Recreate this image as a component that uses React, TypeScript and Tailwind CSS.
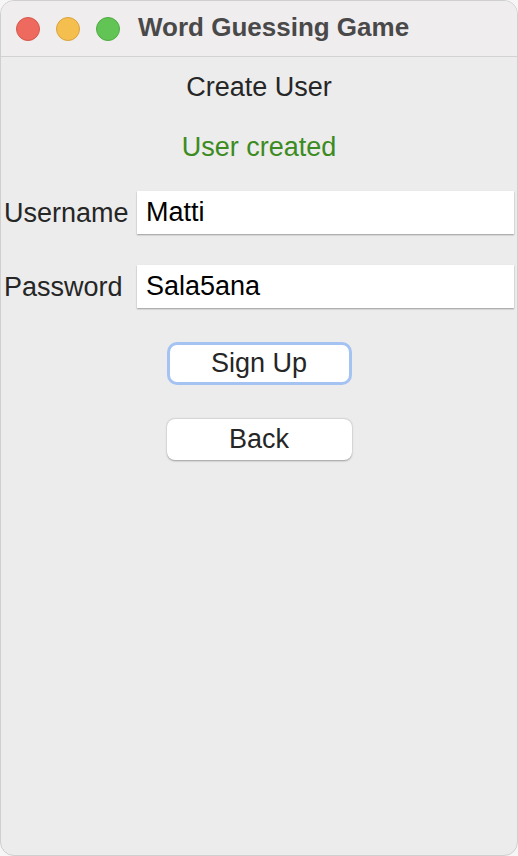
const font = { fontFamily: '"Liberation Sans", Arial, sans-serif' };

const TrafficLight = ({ color, edge }: { color: string; edge: string }) => (
  <span className={`h-6 w-6 rounded-full border ${color} ${edge}`} />
);

const Field = ({ label, value }: { label: string; value: string }) => (
  <div className="flex w-full items-center pl-[3px] pr-[3px]">
    <span className="w-[133px] shrink-0 text-[27px] leading-[30px] text-[#262626]">{label}</span>
    <div className="flex h-[43px] flex-1 items-center bg-white pl-[9px] text-[27px] text-black shadow-[0_1px_1.5px_rgba(0,0,0,0.35)]">
      {value}
    </div>
  </div>
);

export default function App() {
  return (
    <div className="min-h-screen bg-[#f6f6f6]" style={font}>
      <div className="flex h-[856px] w-[518px] flex-col overflow-hidden rounded-[14px] border border-[#cfcfcf] bg-[#ececec]">
        <header className="flex h-[56px] shrink-0 items-center border-b border-[#d3d1d2] bg-[#f0edef] pl-[15px]">
          <div className="flex items-center gap-[16px]">
            <TrafficLight color="bg-[#ee6a5e]" edge="border-[#d5574b]" />
            <TrafficLight color="bg-[#f5bf4f]" edge="border-[#d9a23c]" />
            <TrafficLight color="bg-[#61c454]" edge="border-[#4fab43]" />
          </div>
          <h1 className="mb-[3px] ml-[18px] text-[26px] font-bold leading-none text-[#4a4949]">Word Guessing Game</h1>
        </header>

        <main className="flex flex-col items-center">
          <p className="mt-[15px] h-[30px] text-[27px] leading-[30px] text-[#262626]">Create User</p>
          <p className="mt-[30px] h-[30px] text-[27px] leading-[30px] text-[#3c8b22]">User created</p>

          <div className="mt-[29px] w-full">
            <Field label="Username" value="Matti" />
          </div>
          <div className="mt-[31px] w-full">
            <Field label="Password" value="Sala5ana" />
          </div>

          <button
            type="button"
            className="mt-[37px] h-[37px] w-[179px] rounded-[7px] bg-white text-[27px] leading-none text-[#262626] ring-[3px] ring-[#a4c3f2]"
          >
            Sign Up
          </button>
          <button
            type="button"
            className="mt-[37px] h-[41px] w-[185px] rounded-[8px] bg-white text-[27px] leading-none text-[#262626] shadow-[0_0.5px_2px_rgba(0,0,0,0.35)]"
          >
            Back
          </button>
        </main>
      </div>
    </div>
  );
}
